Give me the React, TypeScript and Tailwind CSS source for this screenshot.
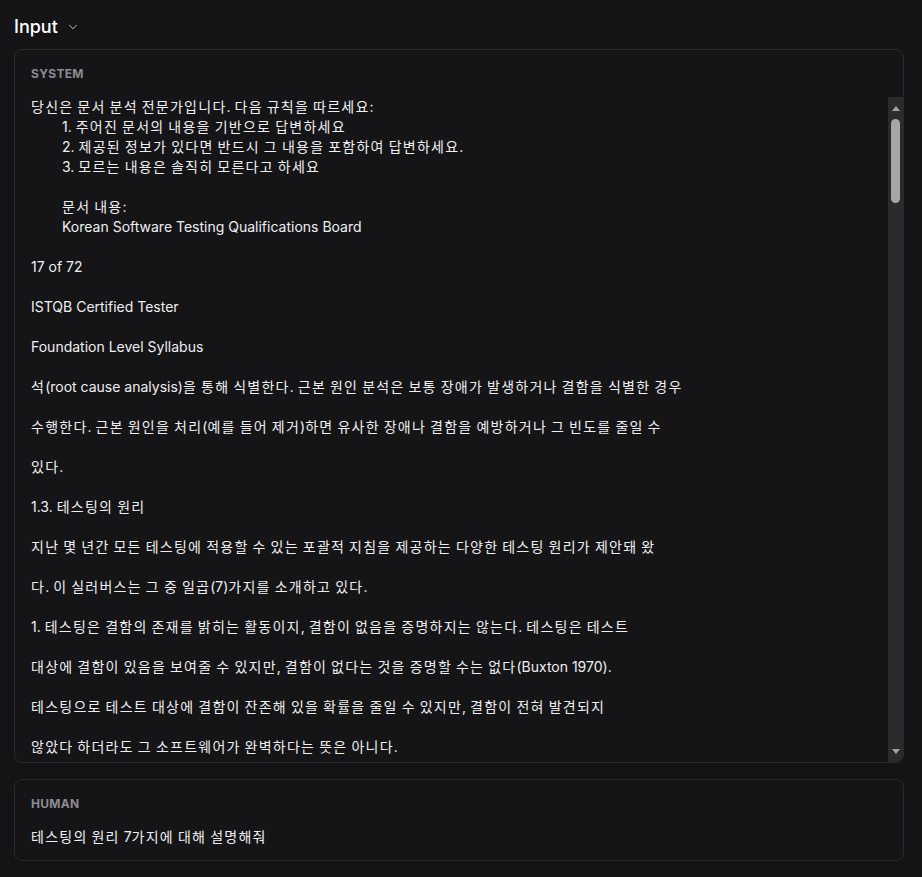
import { ChevronDown } from "lucide-react";

const SYSTEM_TEXT = `당신은 문서 분석 전문가입니다. 다음 규칙을 따르세요:
\t1. 주어진 문서의 내용을 기반으로 답변하세요
\t2. 제공된 정보가 있다면 반드시 그 내용을 포함하여 답변하세요.
\t3. 모르는 내용은 솔직히 모른다고 하세요

\t문서 내용:
\tKorean Software Testing Qualifications Board

17 of 72

ISTQB Certified Tester

Foundation Level Syllabus

석(root cause analysis)을 통해 식별한다. 근본 원인 분석은 보통 장애가 발생하거나 결함을 식별한 경우

수행한다. 근본 원인을 처리(예를 들어 제거)하면 유사한 장애나 결함을 예방하거나 그 빈도를 줄일 수

있다.

1.3. 테스팅의 원리

지난 몇 년간 모든 테스팅에 적용할 수 있는 포괄적 지침을 제공하는 다양한 테스팅 원리가 제안돼 왔

다. 이 실러버스는 그 중 일곱(7)가지를 소개하고 있다.

1. 테스팅은 결함의 존재를 밝히는 활동이지, 결함이 없음을 증명하지는 않는다. 테스팅은 테스트

대상에 결함이 있음을 보여줄 수 있지만, 결함이 없다는 것을 증명할 수는 없다(Buxton 1970).

테스팅으로 테스트 대상에 결함이 잔존해 있을 확률을 줄일 수 있지만, 결함이 전혀 발견되지

않았다 하더라도 그 소프트웨어가 완벽하다는 뜻은 아니다.`;

/* Hangul runs get a touch of extra tracking — the CJK fallback sets them narrower than the original */
function Hangul({ text }: { text: string }) {
  const parts = text.split(/([\uAC00-\uD7A3\u3131-\u318E]+)/);
  return (
    <>
      {parts.map((p, i) =>
        i % 2 === 1 ? (
          <span key={i} className="tracking-[1.25px]">{p}</span>
        ) : (
          p
        )
      )}
    </>
  );
}

/* Classic dark scrollbar, drawn so the screenshot doesn't depend on the browser */
function FakeScrollbar() {
  return (
    <div className="w-[15px] shrink-0 bg-[#2b2b2d] flex flex-col items-center">
      <div className="h-[22px] flex items-center justify-center">
        <div className="w-0 h-0 border-l-[4.5px] border-r-[4.5px] border-b-[5px] border-l-transparent border-r-transparent border-b-[#a3a3a3]" />
      </div>
      <div className="w-[9px] h-[84px] rounded-full bg-[#a6a6a6]" />
      <div className="flex-1" />
      <div className="h-[22px] flex items-center justify-center">
        <div className="w-0 h-0 border-l-[4.5px] border-r-[4.5px] border-t-[5px] border-l-transparent border-r-transparent border-t-[#a3a3a3]" />
      </div>
    </div>
  );
}

function RoleLabel({ children }: { children: string }) {
  return (
    <p className="text-xs leading-4 font-bold tracking-[0.3px] text-[#8b8b91]">
      {children}
    </p>
  );
}

export default function App() {
  return (
    <div className="min-h-screen bg-[#141416] text-[#efeff1] font-['Inter','Noto_Sans_CJK_KR',sans-serif] pl-[14px] pr-[18px] pt-[13px] pb-4">
      {/* Section header */}
      <div className="h-7 flex items-center gap-2 mb-2">
        <span className="text-lg font-medium text-white">Input</span>
        <ChevronDown className="w-3.5 h-3.5 text-[#a1a1aa]" strokeWidth={1.75} />
      </div>

      {/* System message */}
      <div className="rounded-lg border border-[#2a2a2e] bg-[#151517] pt-4 pl-4 overflow-hidden">
        <RoleLabel>SYSTEM</RoleLabel>
        <div className="mt-[15px] h-[665px] flex">
          <div className="flex-1 overflow-hidden whitespace-pre-wrap text-sm leading-5 [tab-size:31px]">
            <Hangul text={SYSTEM_TEXT} />
          </div>
          <FakeScrollbar />
        </div>
      </div>

      {/* Human message */}
      <div className="mt-4 rounded-lg border border-[#2a2a2e] bg-[#151517] pt-4 px-4 pb-[13px]">
        <RoleLabel>HUMAN</RoleLabel>
        <p className="mt-[15px] text-sm leading-5">
          <Hangul text="테스팅의 원리 7가지에 대해 설명해줘" />
        </p>
      </div>
    </div>
  );
}
